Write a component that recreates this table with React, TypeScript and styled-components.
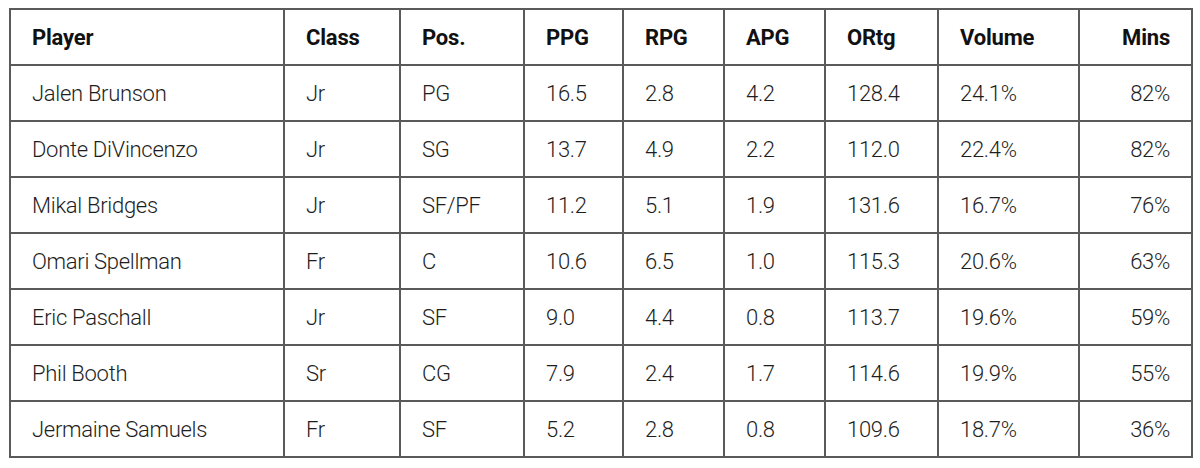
import React from "react";
import styled, { createGlobalStyle } from "styled-components";

const Global = createGlobalStyle`
  html, body { margin: 0; padding: 0; background: #ffffff; }
  body { font-family: Roboto, "Liberation Sans", sans-serif; }
`;

const Page = styled.div`
  padding: 8px 9px;
  width: 1182px;
`;

const Table = styled.table`
  width: 1182px;
  border-collapse: collapse;
  table-layout: fixed;
  border: 2px solid #5a5a5a;
`;

const HeadCell = styled.th<{ $right?: boolean }>`
  height: 56px;
  padding: 0 21px;
  border: 2px solid #5a5a5a;
  text-align: ${(p) => (p.$right ? "right" : "left")};
  font-weight: 700;
  font-size: 22px;
  letter-spacing: -0.2px;
  color: #111;
  box-sizing: border-box;
`;

const Cell = styled.td<{ $right?: boolean }>`
  height: 56px;
  padding: 0 21px;
  border: 2px solid #5a5a5a;
  text-align: ${(p) => (p.$right ? "right" : "left")};
  font-weight: 300;
  font-size: 22px;
  letter-spacing: -0.3px;
  color: #1e1e1e;
  box-sizing: border-box;
`;

const widths = [274, 116, 124, 99, 101, 101, 113, 141, 113];
const headers = ["Player", "Class", "Pos.", "PPG", "RPG", "APG", "ORtg", "Volume", "Mins"];
const rows = [
  ["Jalen Brunson", "Jr", "PG", "16.5", "2.8", "4.2", "128.4", "24.1%", "82%"],
  ["Donte DiVincenzo", "Jr", "SG", "13.7", "4.9", "2.2", "112.0", "22.4%", "82%"],
  ["Mikal Bridges", "Jr", "SF/PF", "11.2", "5.1", "1.9", "131.6", "16.7%", "76%"],
  ["Omari Spellman", "Fr", "C", "10.6", "6.5", "1.0", "115.3", "20.6%", "63%"],
  ["Eric Paschall", "Jr", "SF", "9.0", "4.4", "0.8", "113.7", "19.6%", "59%"],
  ["Phil Booth", "Sr", "CG", "7.9", "2.4", "1.7", "114.6", "19.9%", "55%"],
  ["Jermaine Samuels", "Fr", "SF", "5.2", "2.8", "0.8", "109.6", "18.7%", "36%"],
];

export default function App() {
  return (
    <Page>
      <Global />
      <Table>
        <colgroup>
          {widths.map((w, i) => (
            <col key={i} style={{ width: w }} />
          ))}
        </colgroup>
        <thead>
          <tr>
            {headers.map((h, i) => (
              <HeadCell key={h} $right={i === headers.length - 1}>
                {h}
              </HeadCell>
            ))}
          </tr>
        </thead>
        <tbody>
          {rows.map((r) => (
            <tr key={r[0]}>
              {r.map((c, i) => (
                <Cell key={i} $right={i === r.length - 1}>
                  {c}
                </Cell>
              ))}
            </tr>
          ))}
        </tbody>
      </Table>
    </Page>
  );
}
